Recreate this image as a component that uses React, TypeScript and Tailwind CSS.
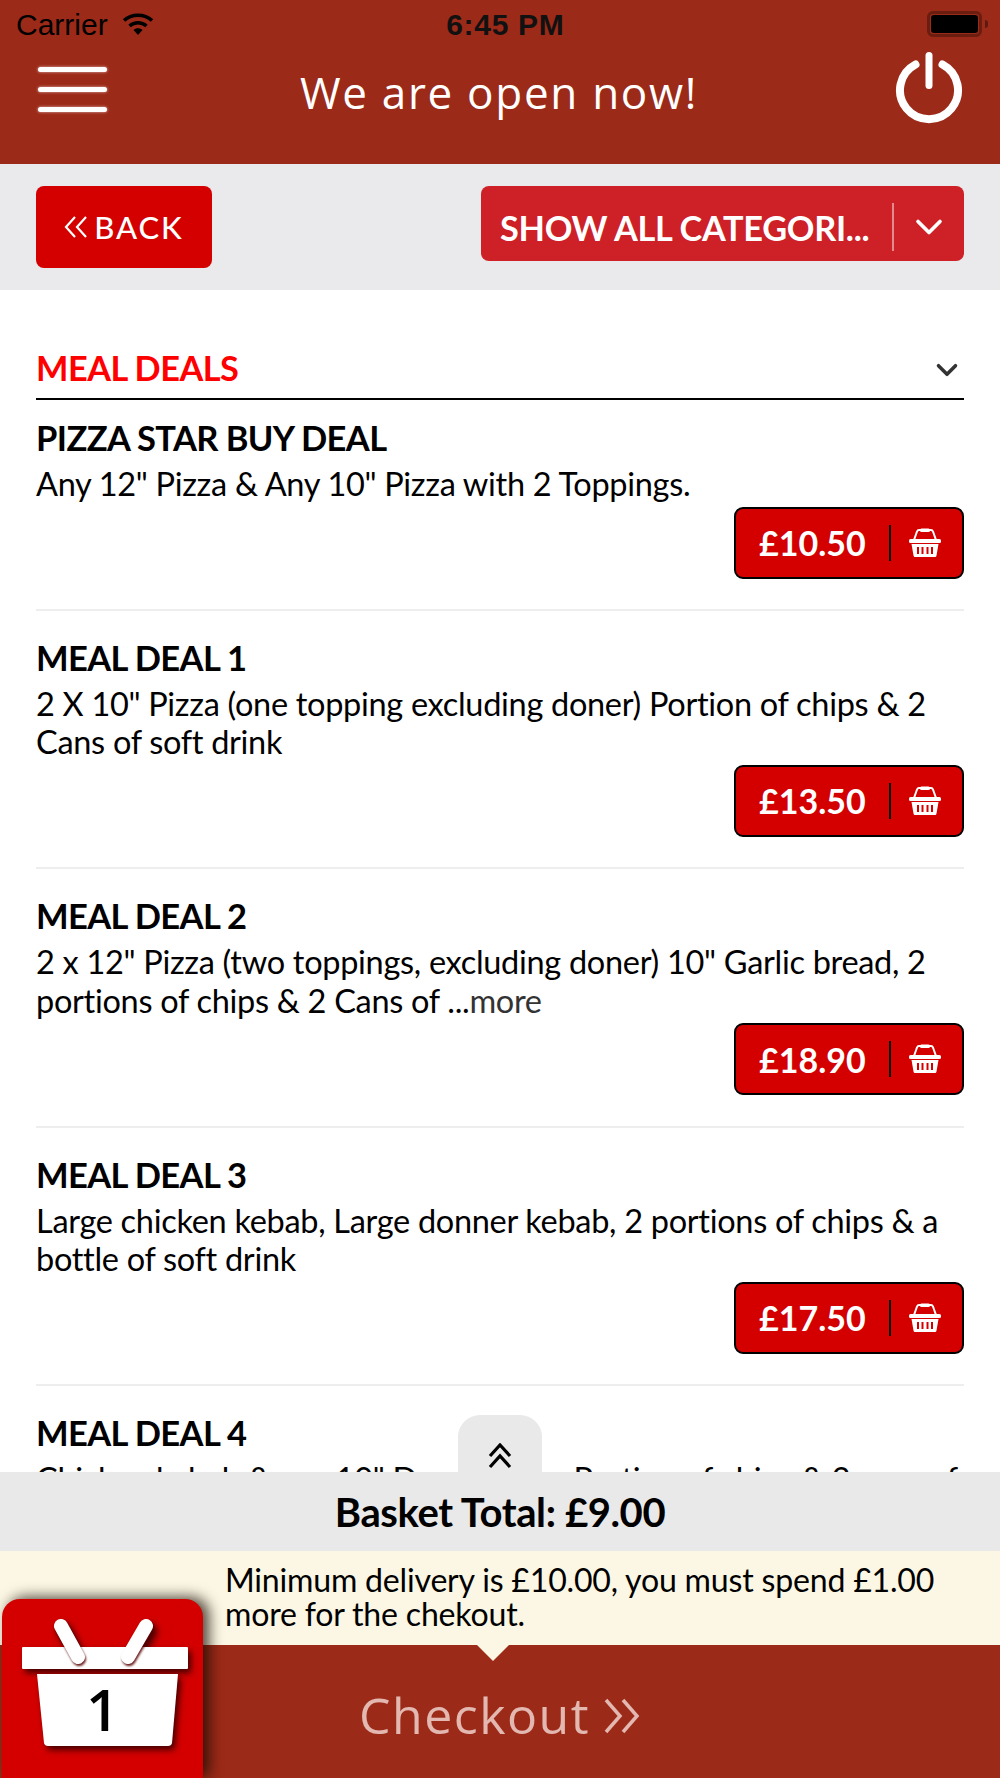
import React from "react";
import { ChevronDown } from "lucide-react";

type Deal = { title: string; lines: React.ReactNode; price: string };

const deals: Deal[] = [
  {
    title: "PIZZA STAR BUY DEAL",
    lines: <p>Any 12" Pizza &amp; Any 10" Pizza with 2 Toppings.</p>,
    price: "£10.50",
  },
  {
    title: "MEAL DEAL 1",
    lines: (
      <>
        <p>2 X 10" Pizza (one topping excluding doner) Portion of chips &amp; 2</p>
        <p>Cans of soft drink</p>
      </>
    ),
    price: "£13.50",
  },
  {
    title: "MEAL DEAL 2",
    lines: (
      <>
        <p>2 x 12" Pizza (two toppings, excluding doner) 10" Garlic bread, 2</p>
        <p>
          portions of chips &amp; 2 Cans of ...<span className="text-[#333333]">more</span>
        </p>
      </>
    ),
    price: "£18.90",
  },
  {
    title: "MEAL DEAL 3",
    lines: (
      <>
        <p>Large chicken kebab, Large donner kebab, 2 portions of chips &amp; a</p>
        <p>bottle of soft drink</p>
      </>
    ),
    price: "£17.50",
  },
];

function WifiIcon() {
  return (
    <svg width="32" height="24" viewBox="0 0 32 24" fill="none">
      <path d="M2 8.500C9.500 1.500 22.500 1.500 30 8.500" stroke="#000" strokeWidth="3.600" />
      <path d="M7.500 14C12.500 9.600 19.500 9.600 24.500 14" stroke="#000" strokeWidth="3.600" />
      <path d="M11.500 18 16 23 20.500 18C18 15.600 14 15.600 11.500 18Z" fill="#000" />
    </svg>
  );
}

function BatteryIcon() {
  return (
    <div className="flex items-center">
      <div className="h-[26px] w-[55px] rounded-[6px] border-[3px] border-[#6b1d10] p-[1px]">
        <div className="h-full w-full rounded-[3px] bg-black" />
      </div>
      <div className="ml-[3px] h-[8px] w-[3px] rounded-r-full bg-[#5e1a0f]" />
    </div>
  );
}

function PowerIcon() {
  return (
    <svg width="68" height="72" viewBox="0 0 68 72" fill="none" stroke="#fff" strokeLinecap="round">
      <path d="M20.500 12.500A29 29 0 1 0 47.500 12.500" strokeWidth="8" />
      <path d="M34 3.500V33.500" strokeWidth="7" />
    </svg>
  );
}

function MiniBasket() {
  return (
    <svg width="34" height="30" viewBox="0 0 34 30" fill="#fff">
      <path d="M6 12 9 3.500C9.400 2.500 10 2 11 2H23C24 2 24.600 2.500 25 3.500L28 12" fill="none" stroke="#fff" strokeWidth="2" />
      <rect x="12" y="0.500" width="10" height="3.500" rx="1.500" />
      <rect x="1" y="11" width="32" height="4" rx="1.500" />
      <path d="M3.500 16H30.500L28.500 27.500C28.300 28.500 27.700 29 26.800 29H7.200C6.300 29 5.700 28.500 5.500 27.500ZM9 19V26H11V19ZM13.500 19V26H15.500V19ZM18.500 19V26H20.500V19ZM23 19V26H25V19Z" fillRule="evenodd" />
    </svg>
  );
}

function BigBasket() {
  return (
    <svg width="176" height="140" viewBox="0 0 176 140" className="drop-shadow-[3px_4px_3px_rgba(60,0,0,0.95)]">
      <rect x="1" y="28" width="166" height="22" rx="1" fill="#fff" />
      <path d="M16 55H157L151 124C150.700 126 149 127 147 127H27C25 127 23.300 126 23 124Z" fill="#fff" />
      <g className="drop-shadow-[1px_2px_1px_rgba(90,0,0,0.9)]">
        <line x1="40" y1="7" x2="57" y2="38" stroke="#fff" strokeWidth="14" strokeLinecap="round" />
        <line x1="125" y1="7" x2="107" y2="38" stroke="#fff" strokeWidth="14" strokeLinecap="round" />
      </g>
    </svg>
  );
}

function DealRow({ deal, first }: { deal: Deal; first: boolean }) {
  return (
    <div className={first ? "mx-9 border-b-2 border-[#eeeeee] pt-[20px] pb-[30px]" : "mx-9 border-b-2 border-[#eeeeee] pt-[29px] pb-[30.500px]"}>
      <h3 className="text-[34.500px] leading-[36px] font-bold tracking-[-0.6px] text-black">{deal.title}</h3>
      <div className="mt-[9px] text-[32.500px] leading-[38.500px] tracking-[-0.3px] whitespace-nowrap text-black">{deal.lines}</div>
      <div className="mt-[3px] flex justify-end">
        <button className="flex h-[72px] w-[230px] items-center rounded-[9px] border-2 border-black bg-[#d40000] text-white">
          <span className="w-[153px] pl-[23px] text-left text-[34px] font-bold">{deal.price}</span>
          <span className="h-[36px] w-[2px] bg-black" />
          <span className="ml-[17px]">
            <MiniBasket />
          </span>
        </button>
      </div>
    </div>
  );
}

export default function App() {
  return (
    <div className="relative flex h-[1778px] w-[1000px] flex-col overflow-hidden bg-white font-['Lato',sans-serif]">
      <header className="h-[164px] shrink-0 bg-[#9c2a18]">
        <div className="flex h-[48px] items-center justify-between pr-[12px] pl-[16px] font-['Liberation_Sans',sans-serif] text-black">
          <div className="flex items-center gap-[14px] text-[30px]">
            <span>Carrier</span>
            <WifiIcon />
          </div>
          <span className="ml-[-70px] text-[30px] font-bold tracking-[0.700px] text-[#111111]">6:45 PM</span>
          <BatteryIcon />
        </div>
        <div className="flex items-start justify-between pr-[37px] pl-[38px]">
          <div className="mt-[19px] flex w-[69px] flex-col gap-[15px]">
            <span className="h-[5px] rounded-sm bg-white shadow-[0_0_3px_rgba(255,255,255,0.7)]" />
            <span className="h-[5px] rounded-sm bg-white shadow-[0_0_3px_rgba(255,255,255,0.7)]" />
            <span className="h-[5px] rounded-sm bg-white shadow-[0_0_3px_rgba(255,255,255,0.7)]" />
          </div>
          <h1 className="mt-[15px] ml-[-4px] font-['Open_Sans',sans-serif] text-[44px] leading-[58px] font-medium tracking-[1.700px] text-white">
            We are open now!
          </h1>
          <div className="mt-[4px]">
            <PowerIcon />
          </div>
        </div>
      </header>

      <div className="flex h-[126px] shrink-0 items-start justify-between bg-[#eae9ec] pt-[22px] pr-[36px] pl-[36px]">
        <button className="flex h-[82px] w-[176px] items-center justify-center gap-[6px] rounded-[8px] bg-[#d40000] text-white">
          <svg width="24" height="24" viewBox="0 0 24 24" fill="none" stroke="#fff" strokeWidth="2.200">
            <path d="M11 2 2 12 11 22" />
            <path d="M22 2 13 12 22 22" />
          </svg>
          <span className="text-[31px] font-medium tracking-[1.900px]">BACK</span>
        </button>
        <button className="flex h-[75px] w-[483px] items-center rounded-[8px] bg-[#ce2027] text-white">
          <span className="w-[411px] pt-[9px] pl-[19px] text-left text-[34.300px] font-bold tracking-[-0.3px] whitespace-nowrap">
            SHOW ALL CATEGORI...
          </span>
          <span className="mt-[6px] h-[48px] w-[2px] bg-[#e38a8d]" />
          <ChevronDown size={44} strokeWidth={2} className="mt-[6px] ml-[13px]" />
        </button>
      </div>

      <main className="min-h-0 flex-1 overflow-hidden">
        <div className="mx-9 mt-[58px] flex h-[52px] items-start justify-between border-b-2 border-black">
          <h2 className="text-[34.300px] leading-[40px] font-bold tracking-[-0.5px] text-[#ff0000]">MEAL DEALS</h2>
          <ChevronDown size={34} strokeWidth={2.500} className="mt-[5px] text-[#333333]" />
        </div>
        {deals.map((d, i) => (
          <DealRow key={d.title} deal={d} first={i === 0} />
        ))}
        <div className="mx-9 pt-[29px]">
          <h3 className="text-[34.500px] leading-[36px] font-bold tracking-[-0.6px] text-black">MEAL DEAL 4</h3>
          <p className="mt-[9px] text-[32.500px] leading-[38.500px] tracking-[-0.3px] whitespace-nowrap text-black">
            Chicken kebab &amp; any 10" Doner pizza, Portion of chips &amp; 2 cans of
          </p>
        </div>
      </main>

      <footer className="shrink-0">
        <div className="flex h-[79px] items-center justify-center bg-[#e9e9e9] text-[40px] font-bold tracking-[-0.4px] text-black">
          Basket Total: £9.00
        </div>
        <div className="h-[94px] bg-[#fcf7e4] pt-[12px] pl-[225px] text-[32.100px] leading-[34px] tracking-[-0.2px] text-black">
          <p>Minimum delivery is £10.00, you must spend £1.00</p>
          <p>more for the chekout.</p>
        </div>
        <div className="relative flex h-[133px] items-center justify-center bg-[#9c2a18] pt-[8px] font-['Open_Sans',sans-serif] text-[50px] tracking-[1.500px] text-[#e2b8b0]">
          <span className="absolute top-0 left-[477px] h-0 w-0 border-x-[16px] border-t-[16px] border-x-transparent border-t-[#fcf7e4]" />
          <span>Checkout</span>
          <svg width="38" height="38" viewBox="0 0 38 38" fill="none" stroke="#e2b8b0" strokeWidth="3.500" className="ml-[13px]">
            <path d="M3 3 17 19 3 35" />
            <path d="M20 3 34 19 20 35" />
          </svg>
        </div>
      </footer>

      <div className="absolute top-[1415px] left-[458px] flex h-[57px] w-[84px] justify-center rounded-t-[22px] bg-[#e9e9e9] pt-[28px]">
        <svg width="24" height="26" viewBox="0 0 24 26" fill="none" stroke="#000" strokeWidth="3.200">
          <path d="M2 13 12 2 22 13" />
          <path d="M2 24 12 13 22 24" />
        </svg>
      </div>

      <div className="absolute top-[1599px] left-[2px] h-[179px] w-[201px] rounded-t-[18px] bg-[#d40000] shadow-[6px_-2px_14px_rgba(20,10,0,0.75)]">
        <div className="absolute top-[20px] left-[19px]">
          <BigBasket />
        </div>
        <span className="absolute top-[70px] left-0 w-full text-center font-['Open_Sans',sans-serif] text-[58px] leading-[80px] font-semibold text-black">
          1
        </span>
      </div>
    </div>
  );
}
